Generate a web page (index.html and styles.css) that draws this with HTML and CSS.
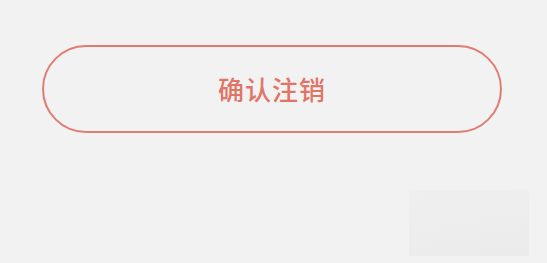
FILE: index.html
```html
<!DOCTYPE html>
<html lang="zh-CN">
<head>
<meta charset="utf-8">
<link rel="stylesheet" href="styles.css">
</head>
<body>
<main class="page">
  <div class="actions">
    <button class="btn-confirm" type="button">确认注销</button>
  </div>
  <div class="footer">
    <div class="ghost"></div>
  </div>
</main>
</body>
</html>
```
FILE: styles.css
```css
html, body {
  margin: 0;
  padding: 0;
  background: #f3f2f2;
}
.page {
  width: 547px;
  height: 263px;
  box-sizing: border-box;
  padding-top: 45px;
  display: flex;
  flex-direction: column;
  font-family: "Noto Sans CJK SC", "Noto Sans", sans-serif;
}
.actions {
  padding: 0 45px 0 42px;
}
.btn-confirm {
  display: flex;
  align-items: center;
  justify-content: center;
  width: 100%;
  height: 88px;
  box-sizing: border-box;
  border: 2px solid #e07d70;
  border-radius: 44px;
  background: transparent;
  color: #e07565;
  font-family: "Noto Sans CJK SC", "Noto Sans", sans-serif;
  font-size: 26px;
  font-weight: 500;
  letter-spacing: 1px;
  padding: 0 0 2px 0;
}
.footer {
  display: flex;
  justify-content: flex-end;
  padding: 57px 18px 0 0;
}
.ghost {
  width: 120px;
  height: 66px;
  background: linear-gradient(170deg, #f0efef, #ebebeb);
}
```
